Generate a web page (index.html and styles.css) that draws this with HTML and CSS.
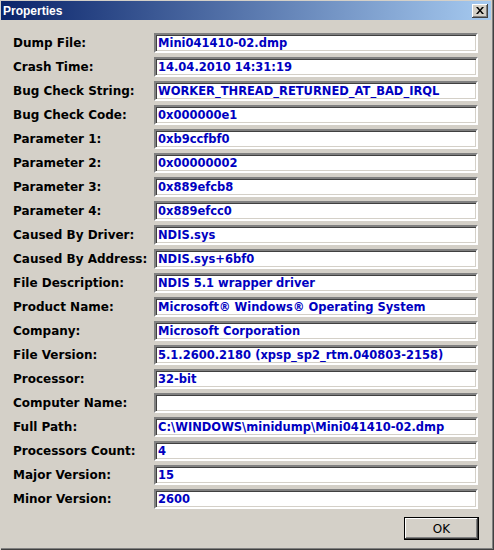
FILE: index.html
```html
<!DOCTYPE html>
<html lang="en">
<head>
    <meta charset="UTF-8">
    <title>Properties</title>
    <link rel="stylesheet" href="styles.css">
</head>
<body>
    <div class="window">
        <div class="titlebar">
            <span class="title">Properties</span>
            <button class="close" title="Close">
                <svg width="8" height="7" viewBox="0 0 8 7"><path d="M0 0h2l2 2.5L6 0h2L5 3.5 8 7H6L4 4.5 2 7H0l3-3.5z" fill="#000"/></svg>
            </button>
        </div>

        <div class="form">
            <label>Dump File:</label>
            <input type="text" readonly value="Mini041410-02.dmp">
            <label>Crash Time:</label>
            <input type="text" readonly value="14.04.2010 14:31:19">
            <label>Bug Check String:</label>
            <input type="text" readonly value="WORKER_THREAD_RETURNED_AT_BAD_IRQL">
            <label>Bug Check Code:</label>
            <input type="text" readonly value="0x000000e1">
            <label>Parameter 1:</label>
            <input type="text" readonly value="0xb9ccfbf0">
            <label>Parameter 2:</label>
            <input type="text" readonly value="0x00000002">
            <label>Parameter 3:</label>
            <input type="text" readonly value="0x889efcb8">
            <label>Parameter 4:</label>
            <input type="text" readonly value="0x889efcc0">
            <label>Caused By Driver:</label>
            <input type="text" readonly value="NDIS.sys">
            <label>Caused By Address:</label>
            <input type="text" readonly value="NDIS.sys+6bf0">
            <label>File Description:</label>
            <input type="text" readonly value="NDIS 5.1 wrapper driver">
            <label>Product Name:</label>
            <input type="text" readonly value="Microsoft® Windows® Operating System">
            <label>Company:</label>
            <input type="text" readonly value="Microsoft Corporation">
            <label>File Version:</label>
            <input type="text" readonly value="5.1.2600.2180 (xpsp_sp2_rtm.040803-2158)">
            <label>Processor:</label>
            <input type="text" readonly value="32-bit">
            <label>Computer Name:</label>
            <input type="text" readonly value="">
            <label>Full Path:</label>
            <input type="text" readonly value="C:\WINDOWS\minidump\Mini041410-02.dmp">
            <label>Processors Count:</label>
            <input type="text" readonly value="4">
            <label>Major Version:</label>
            <input type="text" readonly value="15">
            <label>Minor Version:</label>
            <input type="text" readonly value="2600">
        </div>

        <div class="buttons">
            <button class="ok">OK</button>
        </div>
    </div>
</body>
</html>
```

FILE: styles.css
```css
body {
    margin: 0;
    font-family: "DejaVu Sans", sans-serif;
    font-size: 12px;
}
.window {
    width: 494px;
    height: 550px;
    box-sizing: border-box;
    background-color: #d4d0c8;
    border-left: 1px solid #d4d0c8;
    padding-top: 1px;
    box-shadow: inset -1px -1px #404040, inset -2px -2px #808080;
}
.titlebar {
    height: 19px;
    margin-right: 3px;
    background: linear-gradient(to right, #0a246a, #a6caf0);
    display: flex;
    align-items: center;
    justify-content: space-between;
    padding: 0 3px 0 2px;
}
.title {
    color: white;
    font-family: "Liberation Sans", Arial, sans-serif;
    font-weight: bold;
    font-size: 12px;
}
.close {
    width: 16px;
    height: 14px;
    padding: 0;
    margin: 0;
    border: none;
    background-color: #d4d0c8;
    box-shadow: inset -1px -1px #404040, inset 1px 1px #ffffff, inset -2px -2px #808080;
    display: flex;
    align-items: center;
    justify-content: center;
}
.form {
    display: grid;
    grid-template-columns: 141px 324px;
    row-gap: 4px;
    padding: 13px 0 0 12px;
    align-items: center;
}
.form label {
    font-weight: bold;
    color: #000;
}
.form input {
    height: 20px;
    box-sizing: border-box;
    margin: 0;
    padding: 0 2px;
    border: 2px solid;
    border-color: #808080 #ffffff #ffffff #808080;
    box-shadow: inset 1px 1px #404040, inset -1px -1px #d4d0c8;
    background: white;
    font-family: inherit;
    font-size: 11.5px;
    font-weight: bold;
    color: #0000c0;
    outline: none;
}
.buttons {
    display: flex;
    justify-content: flex-end;
    padding: 8px 15px 0 0;
}
.ok {
    width: 75px;
    height: 23px;
    margin: 0;
    padding: 0;
    border: 1px solid #000;
    background-color: #d4d0c8;
    box-shadow: inset -1px -1px #404040, inset 1px 1px #ffffff, inset -2px -2px #808080;
    font-family: inherit;
    font-size: 12px;
    color: #000;
}
```
